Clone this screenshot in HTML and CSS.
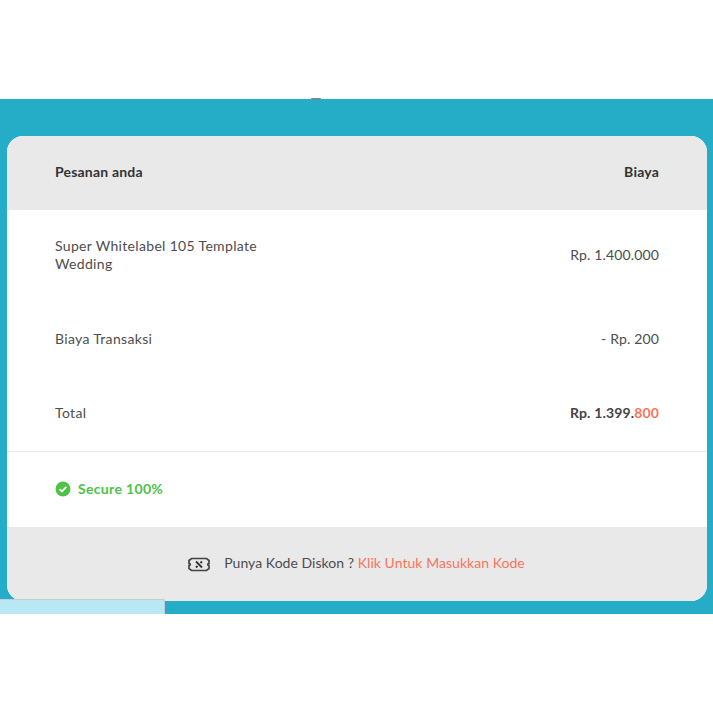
FILE: index.html
```html
<!DOCTYPE html>
<html lang="id">
<head>
<meta charset="utf-8">
<title>Pesanan</title>
<link rel="stylesheet" href="styles.css">
</head>
<body>
<main class="band">
  <span class="speck"></span>
  <section class="card">
    <header class="row head">
      <span>Pesanan anda</span>
      <span>Biaya</span>
    </header>
    <div class="row item">
      <span class="name">Super Whitelabel 105 Template Wedding</span>
      <span class="money">Rp. 1.400.000</span>
    </div>
    <div class="row fee">
      <span>Biaya Transaksi</span>
      <span class="money">- Rp. 200</span>
    </div>
    <div class="row total">
      <span>Total</span>
      <strong class="sum">Rp. 1.399.<span class="accent">800</span></strong>
    </div>
    <div class="secure">
      <svg class="check" viewBox="0 0 16 16" width="16" height="16" aria-hidden="true">
        <circle cx="8" cy="8" r="7.500" fill="#4dc247"/>
        <path d="M4.600 8.200l2.300 2.300 4.400-4.600" fill="none" stroke="#fff" stroke-width="1.800"/>
      </svg>
      <span>Secure 100%</span>
    </div>
    <footer class="promo">
      <svg class="ticket" viewBox="0 0 22 15" width="22" height="15" aria-hidden="true">
        <path d="M3.500 1.500h15l2.500 2v2.800a1.200 1.200 0 0 0 0 2.400v2.800l-2.500 2h-15l-2.500-2V8.700a1.200 1.200 0 0 0 0-2.400V3.500z" fill="none" stroke="#444" stroke-width="1.700"/>
        <path d="M8 4.500l6 6M14 4.500l-1.500 1.500M8 10.500l1.500-1.500" fill="none" stroke="#333" stroke-width="1.900"/>
      </svg>
      <span class="promo-text">Punya Kode Diskon ? <a class="link" href="#">Klik Untuk Masukkan Kode</a></span>
    </footer>
  </section>
  <div class="tab"></div>
</main>
</body>
</html>
```

FILE: styles.css
```css
* { box-sizing: border-box; }
html, body { margin: 0; background: #fff; }
body {
  padding-top: 99px;
  height: 713px;
  overflow: hidden;
  font-family: "Lato", "Noto Sans", sans-serif;
  font-size: 14px;
  line-height: 18px;
  letter-spacing: 0.33px;
  color: #4d4d4d;
}
.band {
  position: relative;
  height: 515px;
  padding: 37px 6px 13px 7px;
  background: #25adc7;
}
.speck {
  position: absolute;
  left: 311px;
  top: -1px;
  width: 10px;
  height: 2px;
  border-radius: 0 0 5px 5px;
  background: #6f8a94;
}
.card {
  position: relative;
  height: 465px;
  display: flex;
  flex-direction: column;
  border-radius: 16px;
  overflow: hidden;
  background: #fff;
}
.row {
  display: flex;
  justify-content: space-between;
  align-items: center;
  padding: 0 48px;
}
.head {
  height: 74px;
  padding-bottom: 2px;
  background: #e9e9e9;
  color: #333;
  font-weight: 700;
  letter-spacing: 0.2px;
}
.item { height: 90px; }
.name { width: 220px; }
.money { letter-spacing: 0.15px; }
.fee { height: 78px; }
.total { height: 73px; padding-bottom: 3px; }
.sum { color: #444; letter-spacing: 0.15px; }
.accent { color: #f9745c; }
.secure {
  height: 76px;
  padding: 0 48px 2px;
  display: flex;
  align-items: center;
  gap: 7px;
  border-top: 1px solid #e9e9e9;
  color: #4dc247;
  font-weight: 700;
}
.promo {
  height: 74px;
  padding-bottom: 2px;
  display: flex;
  justify-content: center;
  align-items: center;
  gap: 14px;
  background: #e9e9e9;
}
.ticket { margin-left: -1px; margin-top: 2px; }
.promo-text { letter-spacing: 0.04px; }
.link { color: #f9745c; text-decoration: none; }
.tab {
  position: absolute;
  left: 0;
  bottom: 0;
  width: 165px;
  height: 15px;
  background: #b7e8f3;
  border-top: 1px solid #c4ccd0;
  border-right: 1px solid #c4ccd0;
  border-radius: 0 2px 0 0;
}
```
